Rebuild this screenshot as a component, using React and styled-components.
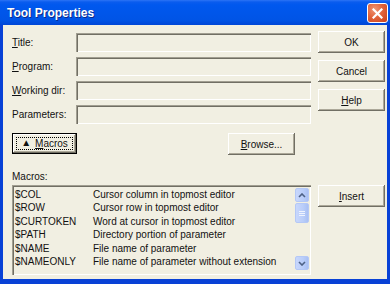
import React from "react";
import styled, { createGlobalStyle } from "styled-components";

const Global = createGlobalStyle`
  html, body { margin: 0; padding: 0; overflow: hidden; }
  body { width: 390px; height: 284px; background: #fff; }
  * { box-sizing: border-box; }
`;

const FACE = "#F1EFE2";
const FONT = `"Liberation Sans", Arial, sans-serif`;

const Window = styled.div`
  width: 390px;
  height: 284px;
  display: flex;
  flex-direction: column;
  background: #0841D6;
  font-family: ${FONT};
  font-size: 10px;
  color: #111;
`;

const TitleBar = styled.div`
  height: 25px;
  flex: none;
  display: flex;
  align-items: center;
  padding: 0 2px 0 7px;
  background: linear-gradient(#2C74F5 0%, #0A5CEE 8%, #0058EE 20%, #0054E6 80%, #0046D6 100%);
`;

const Title = styled.div`
  flex: 1;
  color: #fff;
  font-family: ${FONT};
  font-weight: bold;
  font-size: 12px;
  text-shadow: 1px 1px 0 #0B2A8C;
  padding-top: 1px;
`;

const CloseBtn = styled.div`
  width: 21px;
  height: 20px;
  border: 1px solid #fff;
  border-radius: 3px;
  background: radial-gradient(circle at 35% 30%, #EE9777 0%, #E2643C 45%, #C8411B 100%);
  display: flex;
  align-items: center;
  justify-content: center;
  margin-top: 1px;
`;

const Client = styled.div`
  flex: 1;
  margin: 0 3px 5px 3px;
  background: ${FACE};
  display: flex;
  padding: 6px 2px 0 9px;
  gap: 7px;
`;

const LeftCol = styled.div`
  width: 299px;
  display: flex;
  flex-direction: column;
  padding-top: 2px;
`;

const RightCol = styled.div`
  width: 67px;
  display: flex;
  flex-direction: column;
  gap: 7px;
`;

const FieldRow = styled.div`
  display: flex;
  align-items: center;
  height: 19px;
  margin-bottom: 5px;
`;

const Label = styled.div`
  width: 64px;
  white-space: nowrap;
`;

const Field = styled.div`
  flex: 1;
  height: 19px;
  background: ${FACE};
  box-shadow: inset 1px 1px 0 #A19E91, inset 2px 2px 0 #716F64, inset -1px -1px 0 #FFFFFF;
`;

const Button = styled.div`
  height: ${(p) => p.$h || 22}px;
  width: ${(p) => p.$w || 67}px;
  flex: none;
  display: flex;
  align-items: center;
  justify-content: center;
  background: ${FACE};
  box-shadow: inset -1px -1px 0 #716F64, inset 1px 1px 0 #FFFFFF, inset -2px -2px 0 #ACA899;
  white-space: nowrap;
  margin-top: ${(p) => p.$mt || 0}px;
`;

const DefaultButton = styled(Button)`
  border: 1px solid #000;
  padding: 3px;
`;

const Focus = styled.div`
  width: 100%;
  height: 100%;
  border: 1px dotted #000;
  display: flex;
  align-items: center;
  justify-content: center;
  gap: 4px;
`;

const Tri = styled.span`
  font-size: 10px;
  line-height: 1;
  margin-top: -1px;
`;

const ActionRow = styled.div`
  display: flex;
  align-items: flex-start;
  justify-content: space-between;
  padding-right: 16px;
  margin-top: 4px;
`;

const SectionLabel = styled.div`
  margin-top: 16px;
  height: 14px;
`;

const List = styled.div`
  height: 90px;
  display: flex;
  background: ${FACE};
  box-shadow: inset 1px 1px 0 #A19E91, inset 2px 2px 0 #716F64, inset -1px -1px 0 #FFFFFF;
  padding: 2px 1px 1px 2px;
`;

const Rows = styled.div`
  flex: 1;
  padding-top: 1px;
`;

const Row = styled.div`
  display: flex;
  height: 13.4px;
  line-height: 13.4px;
  white-space: nowrap;
`;

const Key = styled.div`
  width: 79px;
  padding-left: 1px;
`;

const Scroll = styled.div`
  width: 17px;
  display: flex;
  flex-direction: column;
  align-items: center;
  padding: 1px 0 4px 0;
`;

const ScrollBtn = styled.div`
  width: 14px;
  height: ${(p) => p.$h || 14}px;
  border: 1px solid #B4C8F6;
  border-radius: 2px;
  background: linear-gradient(90deg, #C8D7FC 0%, #B9CDF9 60%, #A9C0F3 100%);
  display: flex;
  align-items: center;
  justify-content: center;
  margin-top: ${(p) => p.$mt || 0}px;
`;

const Spacer = styled.div`
  flex: 1;
`;

const macros = [
  ["$COL", "Cursor column in topmost editor"],
  ["$ROW", "Cursor row in topmost editor"],
  ["$CURTOKEN", "Word at cursor in topmost editor"],
  ["$PATH", "Directory portion of parameter"],
  ["$NAME", "File name of parameter"],
  ["$NAMEONLY", "File name of parameter without extension"],
];

export default function App() {
  return (
    <>
      <Global />
      <Window>
        <TitleBar>
          <Title>Tool Properties</Title>
          <CloseBtn>
            <svg width="11" height="11" viewBox="0 0 11 11">
              <path d="M1.5 1.5 L9.5 9.5 M9.5 1.5 L1.5 9.5" stroke="#fff" strokeWidth="2.2" strokeLinecap="square" />
            </svg>
          </CloseBtn>
        </TitleBar>
        <Client>
          <LeftCol>
            <FieldRow>
              <Label><u>T</u>itle:</Label>
              <Field />
            </FieldRow>
            <FieldRow>
              <Label><u>P</u>rogram:</Label>
              <Field />
            </FieldRow>
            <FieldRow>
              <Label><u>W</u>orking dir:</Label>
              <Field />
            </FieldRow>
            <FieldRow>
              <Label>Parameters:</Label>
              <Field />
            </FieldRow>
            <ActionRow>
              <DefaultButton $w={65} $h={21}>
                <Focus>
                  <Tri>▲</Tri>
                  <span><u>M</u>acros</span>
                </Focus>
              </DefaultButton>
              <Button $w={67} $h={22}>
                <span><u>B</u>rowse...</span>
              </Button>
            </ActionRow>
            <SectionLabel>Macros:</SectionLabel>
            <List>
              <Rows>
                {macros.map(([k, v]) => (
                  <Row key={k}>
                    <Key>{k}</Key>
                    <div>{v}</div>
                  </Row>
                ))}
              </Rows>
              <Scroll>
                <ScrollBtn $h={14}>
                  <svg width="8" height="5" viewBox="0 0 8 5">
                    <path d="M1 4 L4 1 L7 4" stroke="#4D6185" strokeWidth="1.6" fill="none" />
                  </svg>
                </ScrollBtn>
                <ScrollBtn $h={20} $mt={1}>
                  <svg width="6" height="6" viewBox="0 0 6 6">
                    <path d="M0 1.5 H6 M0 3.5 H6 M0 5.5 H6" stroke="#EEF3FE" strokeWidth="1" />
                  </svg>
                </ScrollBtn>
                <Spacer />
                <ScrollBtn $h={14}>
                  <svg width="8" height="5" viewBox="0 0 8 5">
                    <path d="M1 1 L4 4 L7 1" stroke="#4D6185" strokeWidth="1.6" fill="none" />
                  </svg>
                </ScrollBtn>
              </Scroll>
            </List>
          </LeftCol>
          <RightCol>
            <Button>OK</Button>
            <Button>Cancel</Button>
            <Button><span><u>H</u>elp</span></Button>
            <Button $mt={67}><span><u>I</u>nsert</span></Button>
          </RightCol>
        </Client>
      </Window>
    </>
  );
}
